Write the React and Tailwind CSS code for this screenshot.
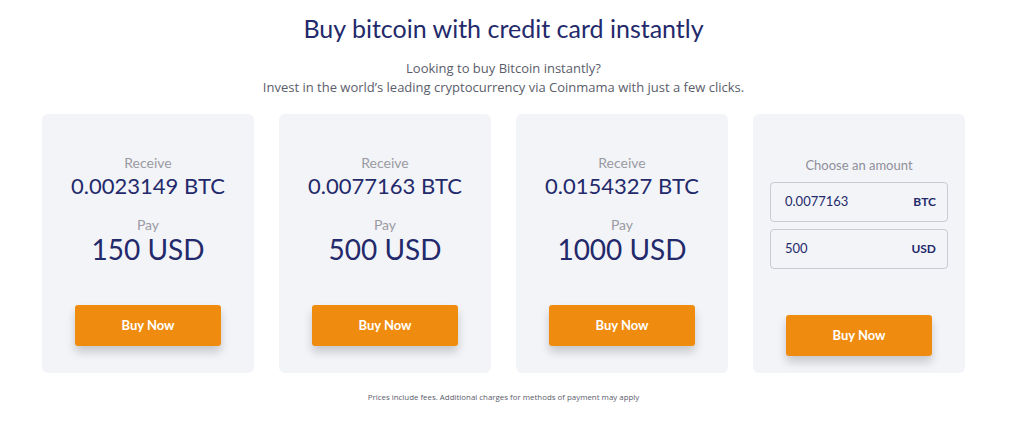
import React from 'react';

const offers = [
  { btc: '0.0023149', usd: '150' },
  { btc: '0.0077163', usd: '500' },
  { btc: '0.0154327', usd: '1000' },
];

const BuyButton = ({ className }) => (
  <button
    className={`h-[41px] w-[146px] rounded-[3px] bg-[#ef8c10] text-[13px] font-bold text-white shadow-[0_6px_10px_rgba(0,0,0,0.18)] ${className}`}
    style={{ fontFamily: 'Lato, sans-serif' }}
  >
    Buy Now
  </button>
);

const OfferCard = ({ btc, usd }) => (
  <div className="flex h-[259px] w-[212px] flex-col items-center rounded-[6px] bg-[#f3f4f8] pt-[40px]" style={{ fontFamily: 'Lato, sans-serif' }}>
    <div className="text-[14px] leading-[18px] text-[#9a9aa2]">Receive</div>
    <div className="text-[22px] leading-[28px] text-[#232a6b]">{btc} BTC</div>
    <div className="mt-[17px] text-[14px] leading-[16px] text-[#9a9aa2]">Pay</div>
    <div className="text-[28px] leading-[32px] text-[#232a6b]">{usd} USD</div>
    <BuyButton className="mt-[40px]" />
  </div>
);

const AmountInput = ({ value, unit }) => (
  <div className="flex h-[40px] w-[178px] items-center justify-between rounded-[4px] border border-[#c9cad2] pl-[14px] pr-[11px]">
    <span className="text-[13px] text-[#232a6b]">{value}</span>
    <span className="text-[12px] font-bold text-[#232a6b]">{unit}</span>
  </div>
);

export default function App() {
  return (
    <div className="h-[430px] w-[1007px] bg-white" style={{ fontFamily: '"Open Sans", sans-serif' }}>
      <h1 className="pt-[12px] text-center text-[25px] leading-[32px] text-[#232a6b]" style={{ fontFamily: 'Lato, sans-serif' }}>
        Buy bitcoin with credit card instantly
      </h1>
      <p className="mt-[15px] text-center text-[13px] leading-[19px] text-[#5b5d6b]">
        Looking to buy Bitcoin instantly?
        <br />
        Invest in the world’s leading cryptocurrency via Coinmama with just a few clicks.
      </p>
      <div className="mt-[17px] flex justify-center gap-[25px]">
        {offers.map((o) => (
          <OfferCard key={o.usd} {...o} />
        ))}
        <div className="flex h-[259px] w-[212px] flex-col items-center rounded-[6px] bg-[#f3f4f8] pt-[43px]" style={{ fontFamily: 'Lato, sans-serif' }}>
          <div className="text-[13px] leading-[16px] text-[#8e8f98]">Choose an amount</div>
          <div className="mt-[9px] flex flex-col gap-[7px]">
            <AmountInput value="0.0077163" unit="BTC" />
            <AmountInput value="500" unit="USD" />
          </div>
          <BuyButton className="mt-[46px]" />
        </div>
      </div>
      <p className="mt-[19px] text-center text-[7.9px] text-[#5b5d6b]">
        Prices include fees. Additional charges for methods of payment may apply
      </p>
    </div>
  );
}
